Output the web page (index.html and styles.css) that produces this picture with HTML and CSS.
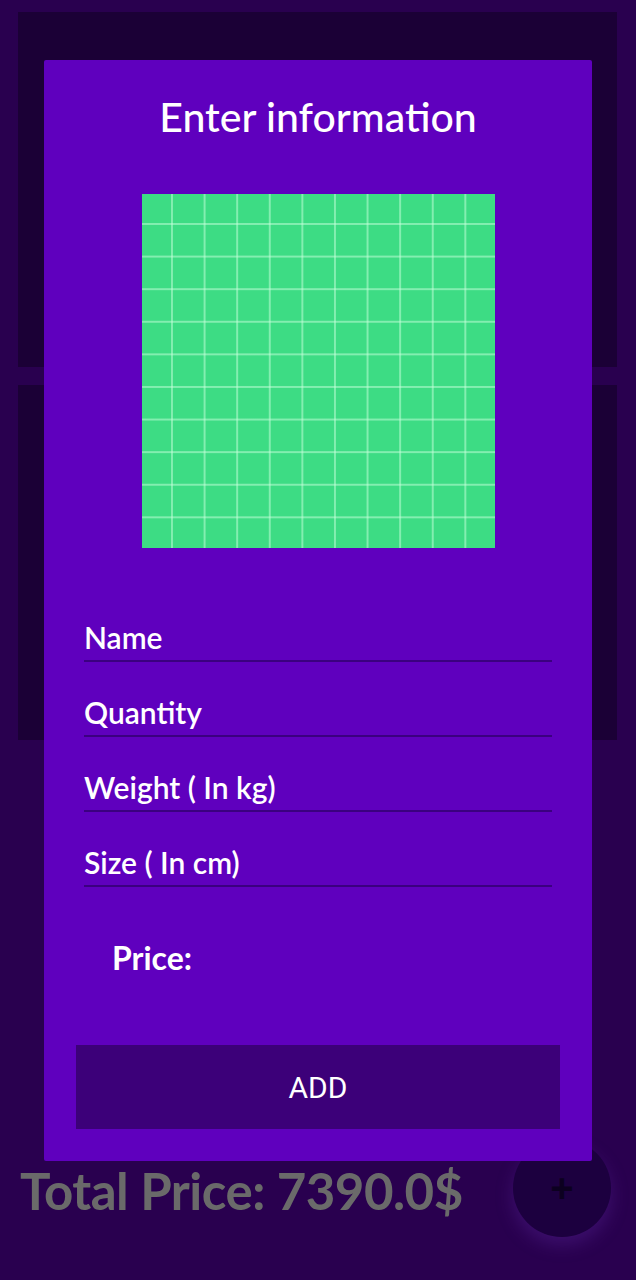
FILE: index.html
```html
<!DOCTYPE html>
<html lang="en">
<head>
    <meta charset="UTF-8">
    <meta name="viewport" content="width=device-width, initial-scale=1.0">
    <title>Shopping list</title>
    <link rel="stylesheet" href="styles.css">
</head>
<body>
    <div class="screen">
        <div class="item-list">
            <div class="item-card"></div>
            <div class="item-card"></div>
        </div>

        <div class="bottom-bar">
            <p class="total">Total Price: 7390.0$</p>
            <button class="fab">+</button>
        </div>

        <div class="dialog">
            <h2>Enter information</h2>
            <div class="picture"></div>

            <form class="fields">
                <div class="field"><input type="text" placeholder="Name"></div>
                <div class="field"><input type="text" placeholder="Quantity"></div>
                <div class="field"><input type="text" placeholder="Weight ( In kg)"></div>
                <div class="field"><input type="text" placeholder="Size ( In cm)"></div>
            </form>

            <p class="price">Price:</p>

            <button class="btn">ADD</button>
        </div>
    </div>
</body>
</html>
```

FILE: styles.css
```css
* {
    margin: 0;
    padding: 0;
    box-sizing: border-box;
}

body {
    background-color: #29004f;
    font-family: 'Lato', sans-serif;
}

.screen {
    position: relative;
    height: 1280px;
    display: flex;
    flex-direction: column;
}

.item-list {
    flex: 1;
    display: flex;
    flex-direction: column;
    gap: 18px;
    padding: 12px 19px 0 18px;
}

.item-card {
    height: 355px;
    background-color: #1b0036;
}

.bottom-bar {
    display: flex;
    align-items: center;
    justify-content: space-between;
    padding: 0 25px 43px 20px;
}

.total {
    font-size: 51px;
    font-weight: 700;
    color: #6a6a6a;
    letter-spacing: -0.5px;
    margin-top: 4px;
}

.fab {
    width: 98px;
    height: 98px;
    border-radius: 50%;
    border: none;
    background-color: #1c003f;
    color: #0c0020;
    font-size: 40px;
    font-weight: 700;
    box-shadow: 0 8px 18px rgba(120, 60, 200, 0.25);
}

.dialog {
    position: absolute;
    top: 60px;
    left: 44px;
    width: 548px;
    height: 1101px;
    background-color: #5f00be;
    border-radius: 2px;
    padding: 31px 32px 0 32px;
    display: flex;
    flex-direction: column;
    align-items: center;
}

.dialog h2 {
    color: #fff;
    font-size: 41px;
    font-weight: 500;
    height: 52px;
    line-height: 52px;
}

.picture {
    margin-top: 51px;
    width: 353px;
    height: 354px;
    background-color: #3ddc84;
    background-image:
        linear-gradient(to right, rgba(200, 255, 220, 0.5) 2px, transparent 2px),
        linear-gradient(to bottom, rgba(200, 255, 220, 0.5) 2px, transparent 2px);
    background-size: 32.6px 32.6px;
    background-position: 29px 29px;
}

.fields {
    align-self: stretch;
    margin-top: 66px;
    padding: 0 8px;
    display: flex;
    flex-direction: column;
    gap: 27px;
}

.field input {
    width: 100%;
    height: 48px;
    padding: 0;
    border: none;
    border-bottom: 2px solid #3b0080;
    background: transparent;
    color: #fff;
    font-family: 'Lato', sans-serif;
    font-size: 30px;
    font-weight: 600;
    outline: none;
}

.field input::placeholder {
    color: #fff;
    opacity: 1;
}

.price {
    align-self: flex-start;
    margin: 51px 0 0 36px;
    color: #fff;
    font-size: 32px;
    font-weight: 700;
}

.btn {
    align-self: stretch;
    margin-top: 68px;
    height: 84px;
    background-color: #3c0079;
    border: none;
    color: #fff;
    font-family: 'Roboto', sans-serif;
    font-size: 30px;
}
```
